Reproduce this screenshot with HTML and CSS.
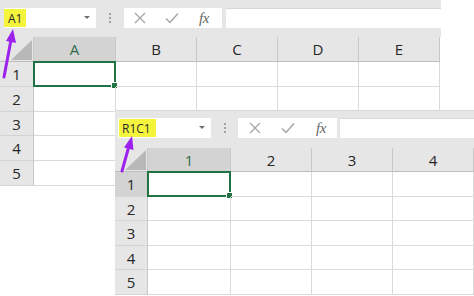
FILE: index.html
```html
<!DOCTYPE html>
<html>
<head>
<meta charset="utf-8">
<link rel="stylesheet" href="styles.css">
</head>
<body>
<div class="stage">
  <div class="win win1">
    <div class="fbar">
      <div class="namebox"><span class="hl">A1</span><span class="dd"></span></div>
      <div class="sep"><i></i><i></i><i></i></div>
      <div class="fbtns">
        <svg class="ic" width="12" height="12" viewBox="0 0 12 12"><path d="M1 1L11 11M11 1L1 11" stroke="#a6a6a6" stroke-width="1.3" fill="none"/></svg>
        <svg class="ic" width="14" height="12" viewBox="0 0 14 12"><path d="M1 6.5L5 10.5L13 1.5" stroke="#a6a6a6" stroke-width="1.5" fill="none"/></svg>
        <span class="fx">fx</span>
      </div>
      <div class="finput"></div>
    </div>
    <div class="grid g1">
      <div class="corner"><span class="tri"></span></div>
      <div class="ch sel">A</div><div class="ch">B</div><div class="ch">C</div><div class="ch">D</div><div class="ch">E</div>
      <div class="rh">1</div><div class="c active"></div><div class="c"></div><div class="c"></div><div class="c"></div><div class="c"></div>
      <div class="rh">2</div><div class="c"></div><div class="c"></div><div class="c"></div><div class="c"></div><div class="c"></div>
      <div class="rh">3</div><div class="c"></div><div class="c"></div><div class="c"></div><div class="c"></div><div class="c"></div>
      <div class="rh">4</div><div class="c"></div><div class="c"></div><div class="c"></div><div class="c"></div><div class="c"></div>
      <div class="rh">5</div><div class="c"></div><div class="c"></div><div class="c"></div><div class="c"></div><div class="c"></div>
    </div>
  </div>

  <div class="win win2">
    <div class="fbar">
      <div class="namebox"><span class="hl">R1C1</span><span class="dd"></span></div>
      <div class="sep"><i></i><i></i><i></i></div>
      <div class="fbtns">
        <svg class="ic" width="12" height="12" viewBox="0 0 12 12"><path d="M1 1L11 11M11 1L1 11" stroke="#a6a6a6" stroke-width="1.3" fill="none"/></svg>
        <svg class="ic" width="14" height="12" viewBox="0 0 14 12"><path d="M1 6.5L5 10.5L13 1.5" stroke="#a6a6a6" stroke-width="1.5" fill="none"/></svg>
        <span class="fx">fx</span>
      </div>
      <div class="finput"></div>
    </div>
    <div class="grid g2">
      <div class="corner"><span class="tri"></span></div>
      <div class="ch sel">1</div><div class="ch">2</div><div class="ch">3</div><div class="ch">4</div>
      <div class="rh rsel">1</div><div class="c active"></div><div class="c"></div><div class="c"></div><div class="c"></div>
      <div class="rh">2</div><div class="c"></div><div class="c"></div><div class="c"></div><div class="c"></div>
      <div class="rh">3</div><div class="c"></div><div class="c"></div><div class="c"></div><div class="c"></div>
      <div class="rh">4</div><div class="c"></div><div class="c"></div><div class="c"></div><div class="c"></div>
      <div class="rh">5</div><div class="c"></div><div class="c"></div><div class="c"></div><div class="c"></div>
    </div>
  </div>

  <svg class="arrows" width="474" height="296" viewBox="0 0 474 296">
    <line x1="4" y1="77" x2="11" y2="40" stroke="#9d22ee" stroke-width="3" stroke-linecap="round"/>
    <polygon points="13,29 16,43 6,41" fill="#9d22ee"/>
    <line x1="122" y1="171" x2="129" y2="146" stroke="#9d22ee" stroke-width="3" stroke-linecap="round"/>
    <polygon points="132,136 133.5,150 124,147.5" fill="#9d22ee"/>
  </svg>
</div>
</body>
</html>
```

FILE: styles.css
```css
html, body {
  margin: 0;
  padding: 0;
  background: #ffffff;
}

.stage {
  position: relative;
  width: 474px;
  height: 296px;
  overflow: hidden;
  font-family: "Open Sans", "Noto Sans", "DejaVu Sans", sans-serif;
  color: #333333;
}

.win {
  background: #ffffff;
}

.win1 {
  width: 441px;
}

.win2 {
  position: absolute;
  left: 115px;
  top: 110px;
  width: 359px;
  height: 186px;
  border-top: 1px solid #d8d8d8;
  box-sizing: border-box;
}

.fbar {
  display: flex;
  align-items: flex-start;
  background: #e6e6e6;
  box-sizing: border-box;
}

.win1 .fbar {
  height: 37px;
  padding: 8px 0 0 4px;
}

.win2 .fbar {
  height: 37px;
  padding: 7px 0 0 3px;
}

.namebox {
  position: relative;
  height: 20px;
  background: #ffffff;
  display: flex;
  align-items: center;
  box-sizing: border-box;
}

.win1 .namebox { width: 92px; }
.win2 .namebox { width: 93px; }

.hl {
  background: #f4f43c;
  height: 18px;
  display: flex;
  align-items: center;
  font-size: 12px;
  color: #2b2b2b;
  padding: 0 4px 0 4px;
}

.win2 .hl { padding: 0 5px 0 3px; margin-left: 1px; }

.dd {
  position: absolute;
  right: 6px;
  top: 8px;
  width: 0;
  height: 0;
  border-left: 3px solid transparent;
  border-right: 3px solid transparent;
  border-top: 3px solid #707070;
}

.sep {
  display: flex;
  flex-direction: column;
  align-items: center;
  justify-content: center;
  gap: 2px;
  height: 20px;
}

.win1 .sep { width: 28px; }
.win2 .sep { width: 27px; }

.sep i {
  display: block;
  width: 2px;
  height: 2px;
  background: #a0a0a0;
}

.fbtns {
  height: 20px;
  background: #ffffff;
  display: flex;
  align-items: center;
  box-sizing: border-box;
}

.win1 .fbtns { width: 98px; padding-left: 10px; gap: 19px; }
.win2 .fbtns { width: 99px; padding-left: 11px; gap: 20px; }

.fx {
  font-family: "Liberation Serif", "DejaVu Serif", serif;
  font-style: italic;
  font-size: 15px;
  color: #666666;
  letter-spacing: -0.5px;
  margin-left: 1px;
}

.finput {
  flex: 1;
  height: 20px;
  background: #ffffff;
  margin-left: 4px;
  box-sizing: border-box;
  border-top: 1px solid #d6d6d6;
}

.win2 .finput { margin-left: 3px; }

.grid {
  display: grid;
  background: #ffffff;
}

.g1 {
  grid-template-columns: 34px 82px 81px 81px 81px 81px;
  grid-template-rows: 25px 25px 25px 24px 25px 25px;
}

.g2 {
  grid-template-columns: 33px 83px 81px 81px 81px;
  grid-template-rows: 24px 25px 24px 25px 24px 25px;
}

.corner {
  position: relative;
  background: #e6e6e6;
  border-right: 1px solid #c8c8c8;
  border-bottom: 1px solid #bdbdbd;
}

.tri {
  position: absolute;
  right: 1px;
  bottom: 1px;
  width: 21px;
  height: 20px;
  background: #b8b8b8;
  clip-path: polygon(100% 0, 100% 100%, 0 100%);
}

.ch {
  background: #e6e6e6;
  border-right: 1px solid #c8c8c8;
  border-bottom: 1px solid #bdbdbd;
  display: flex;
  align-items: center;
  justify-content: center;
  font-size: 15px;
  color: #262626;
  box-sizing: border-box;
}

.ch.sel {
  background: #d3d3d3;
  color: #2e6b4a;
}

.rh {
  background: #e6e6e6;
  border-right: 1px solid #c8c8c8;
  border-bottom: 1px solid #d4d4d4;
  display: flex;
  align-items: center;
  justify-content: center;
  font-size: 15px;
  color: #262626;
  box-sizing: border-box;
}

.rh.rsel {
  background: #d3d3d3;
}

.c {
  position: relative;
  border-right: 1px solid #dadada;
  border-bottom: 1px solid #dadada;
  box-sizing: border-box;
}

.c.active {
  border: 2px solid #217346;
  margin: -1px 0 0 -1px;
}

.c.active::after {
  content: "";
  position: absolute;
  right: -4px;
  bottom: -4px;
  width: 5px;
  height: 5px;
  background: #217346;
  border: 1px solid #ffffff;
}

.arrows {
  position: absolute;
  left: 0;
  top: 0;
  pointer-events: none;
}
```
